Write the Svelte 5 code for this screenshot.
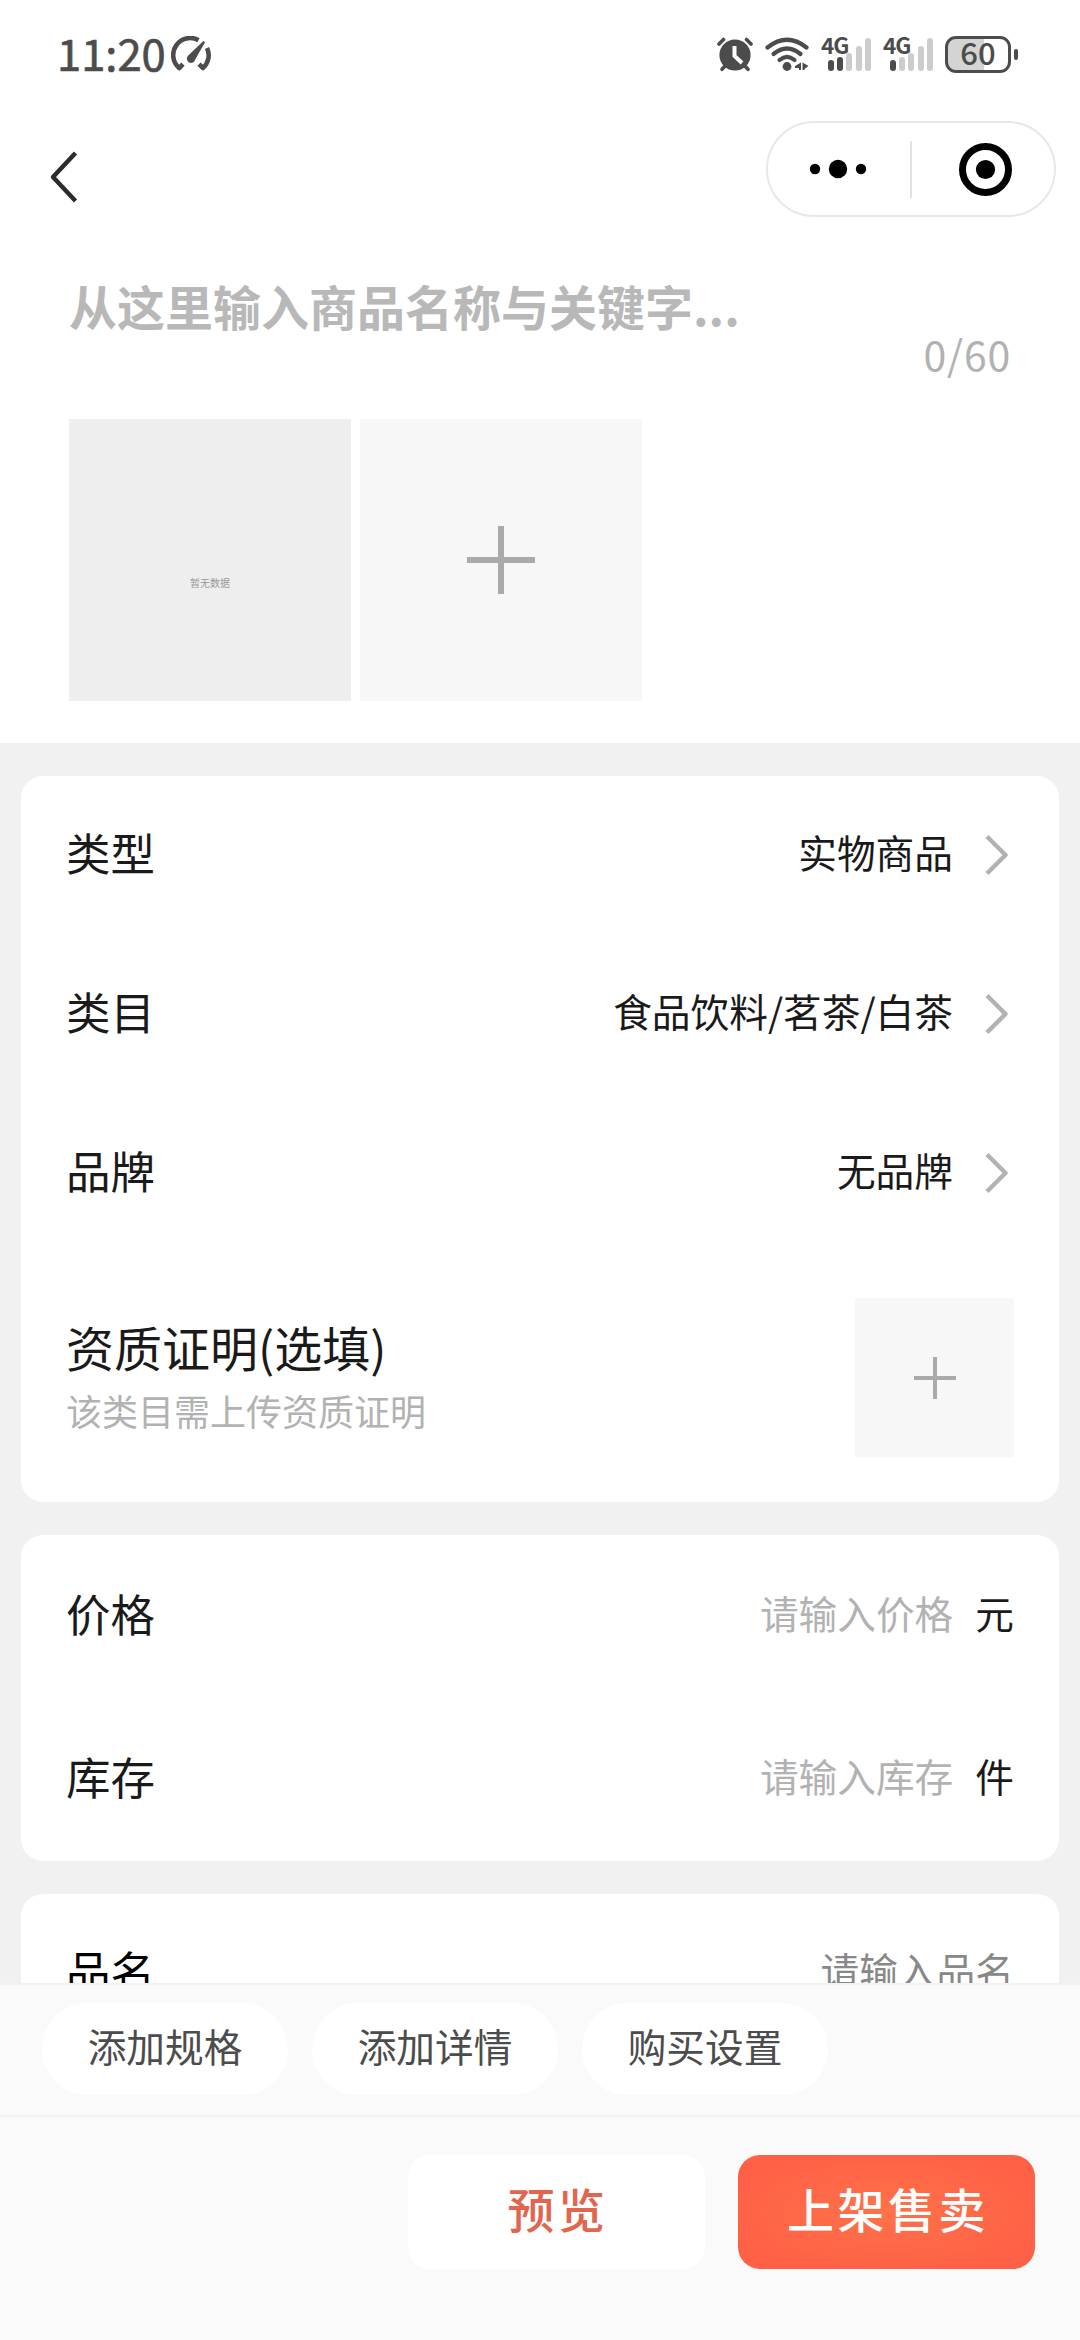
<script>
  const goodsRows = [
    { label: "类型", value: "实物商品" },
    { label: "类目", value: "食品饮料/茗茶/白茶" },
    { label: "品牌", value: "无品牌" }
  ];

  const stockRows = [
    { label: "价格", hint: "请输入价格", unit: "元" },
    { label: "库存", hint: "请输入库存", unit: "件" }
  ];

  const shortcuts = ["添加规格", "添加详情", "购买设置"];

  // number of lit bars for each sim card
  const sims = [2, 1];
  const barHeights = [11, 14, 18, 25, 33];

  const maxLength = 60;
  let title = $state("");
</script>

<div class="page">
  <div class="status-bar">
    <span class="time">11:20</span>
    <svg class="gauge" width="40" height="36" viewBox="0 0 40 36">
      <g fill="none" stroke="#4c4c4c" stroke-width="4.6" stroke-linejoin="round">
        <path d="M27.5 4.2 A17 17 0 0 0 8.2 32 L12 28.2" />
        <path d="M36 12 A17 17 0 0 1 32 32 L28 28.2" />
      </g>
      <path d="M32.4 5 L34 6.2 L24.2 23.4 A4.2 4.2 0 1 1 17 19.8 Z" fill="#4c4c4c" />
    </svg>
    <div class="status-icons">
      <svg class="alarm" width="36" height="36" viewBox="0 0 36 36">
        <g stroke="#4c4c4c" stroke-width="3.6" stroke-linecap="round">
          <path d="M2 8 L6.5 3.5 M34 8 L29.5 3.5" />
          <path d="M8 30 L5 33.3 M28 30 L31 33.3" />
        </g>
        <circle cx="18" cy="19" r="15.6" fill="#4c4c4c" />
        <path d="M17.5 10 V20 L25 27" fill="none" stroke="#fff" stroke-width="4" />
      </svg>
      <svg class="wifi" width="44" height="36" viewBox="0 0 44 36">
        <g fill="none" stroke="#4c4c4c" stroke-width="4.2" stroke-linecap="round">
          <path d="M2.5 11.5 Q22 -4 41.5 11.5" />
          <path d="M8.5 18 Q22 7 35.5 18" />
          <path d="M14.5 24 Q22 17.8 29.5 24" />
        </g>
        <circle cx="22" cy="30.5" r="4.4" fill="#4c4c4c" />
        <path d="M30 30 L36 26.5 V34 H34 V32 H30 Z M37.5 26.5 L43.5 30 L39.5 33 V34 H37.5 Z" fill="#4c4c4c" />
      </svg>
      {#each sims as level}
        <div class="sim">
          <span class="network">4G</span>
          <div class="bars">
            {#each barHeights as height, i}
              <i class:lit={i < level} style="height: {height}px"></i>
            {/each}
          </div>
        </div>
      {/each}
      <div class="battery"><span>60</span></div>
      <div class="battery-cap"></div>
    </div>
  </div>

  <header>
    <svg class="back" width="30" height="54" viewBox="0 0 30 54">
      <path d="M26.5 3 L4 27 L26.5 51" fill="none" stroke="#2b2b2b" stroke-width="4.4" stroke-linejoin="round" />
    </svg>
    <div class="capsule">
      <svg width="290" height="96" viewBox="0 0 290 96">
        <circle cx="49" cy="48" r="5.2" />
        <circle cx="72" cy="48" r="9.2" />
        <circle cx="95" cy="48" r="5.2" />
        <path d="M145 20 V77" stroke="#e2e2e2" stroke-width="2" />
        <circle cx="219.5" cy="48.5" r="23" fill="none" stroke="#000" stroke-width="7" />
        <circle cx="219.5" cy="48.5" r="9.6" />
      </svg>
    </div>
  </header>

  <section class="intro">
    <div class="title-hint">从这里输入商品名称与关键字...</div>
    <div class="counter">{title.length}/{maxLength}</div>
    <div class="pictures">
      <div class="picture empty">暂无数据</div>
      <div class="picture add">
        <svg width="68" height="68" viewBox="0 0 68 68">
          <path d="M34 0 V68 M0 34 H68" stroke="#aaa" stroke-width="6" />
        </svg>
      </div>
    </div>
  </section>

  <main>
    <div class="card">
      {#each goodsRows as row}
        <div class="row">
          <span class="label">{row.label}</span>
          <span class="value">{row.value}</span>
          <svg class="arrow" width="24" height="42" viewBox="0 0 24 42">
            <path d="M3 2.5 L21.5 21 L3 39.5" fill="none" stroke="#b2b2b2" stroke-width="4.4" stroke-linejoin="round" />
          </svg>
        </div>
      {/each}
      <div class="proof">
        <div class="proof-text">
          <div class="proof-title">资质证明(选填)</div>
          <div class="proof-note">该类目需上传资质证明</div>
        </div>
        <div class="proof-add">
          <svg width="42" height="42" viewBox="0 0 42 42">
            <path d="M21 0 V42 M0 21 H42" stroke="#aaa" stroke-width="4" />
          </svg>
        </div>
      </div>
    </div>

    <div class="card">
      {#each stockRows as row}
        <div class="row tall">
          <span class="label">{row.label}</span>
          <span class="value hint">{row.hint}</span>
          <span class="unit">{row.unit}</span>
        </div>
      {/each}
    </div>

    <div class="card">
      <div class="row">
        <span class="label black">品名</span>
        <span class="value name-hint">请输入品名</span>
      </div>
    </div>
  </main>

  <footer>
    <div class="shortcuts">
      {#each shortcuts as shortcut}
        <button class="pill">{shortcut}</button>
      {/each}
    </div>
    <div class="actions">
      <button class="action preview">预览</button>
      <button class="action publish">上架售卖</button>
    </div>
  </footer>
</div>

<style>
  :global(body) {
    margin: 0;
    background: #f1f1f1;
  }

  .page {
    width: 1080px;
    height: 2340px;
    display: flex;
    flex-direction: column;
    overflow: hidden;
    background: #f1f1f1;
    color: #1a1a1a;
    font-family: "Noto Sans CJK SC", "Noto Sans", sans-serif;
  }

  button {
    border: none;
    padding: 0;
    font-family: inherit;
  }

  .status-bar {
    height: 108px;
    flex: none;
    box-sizing: border-box;
    padding: 0 62px 0 57px;
    display: flex;
    align-items: center;
    background: #fff;
    color: #4c4c4c;
  }

  .time {
    width: 106px;
    padding-bottom: 2px;
    font-size: 43.5px;
    line-height: 60px;
    -webkit-text-stroke: 0.7px #4c4c4c;
  }

  .gauge {
    margin-left: 8px;
  }

  .status-icons {
    margin-left: auto;
    display: flex;
    align-items: center;
  }

  .wifi {
    margin-left: 12px;
  }

  .sim {
    position: relative;
    width: 50px;
    height: 34px;
    margin-left: 12px;
    display: flex;
    justify-content: flex-end;
  }

  .network {
    position: absolute;
    left: 0;
    top: -2px;
    font-size: 22.5px;
    line-height: 18px;
    font-weight: 700;
    letter-spacing: -1px;
  }

  .bars {
    display: flex;
    align-items: flex-end;
    gap: 3.3px;
  }

  .bars i {
    width: 6px;
    border-radius: 3px;
    background: #ccc;
  }

  .bars .lit {
    background: #4c4c4c;
  }

  .battery {
    width: 66px;
    height: 37px;
    margin-left: 12px;
    box-sizing: border-box;
    padding-bottom: 4px;
    border: 3px solid #4c4c4c;
    border-radius: 11px;
    background: linear-gradient(to right, #d4d4d4 60%, #fff 60%);
    display: flex;
    align-items: center;
    justify-content: center;
    font-size: 31px;
    font-weight: 500;
    line-height: 28px;
  }

  .battery-cap {
    width: 4px;
    height: 11px;
    margin-left: 3px;
    border-radius: 2px;
    background: #4c4c4c;
  }

  header {
    height: 132px;
    flex: none;
    box-sizing: border-box;
    padding: 13px 24px 0 49px;
    display: flex;
    justify-content: space-between;
    background: #fff;
  }

  .back {
    margin-top: 29px;
  }

  .capsule {
    width: 290px;
    height: 96px;
    box-sizing: border-box;
    border: 2px solid #e8e8e8;
    border-radius: 48px;
  }

  .capsule svg {
    display: block;
    margin: -2px;
  }

  .intro {
    height: 503px;
    flex: none;
    box-sizing: border-box;
    padding: 30px 69px 0;
    background: #fff;
  }

  .title-hint {
    height: 70px;
    line-height: 70px;
    font-size: 48px;
    font-weight: 700;
    color: #b8b8b8;
  }

  .counter {
    height: 28px;
    line-height: 26px;
    text-align: right;
    font-size: 41px;
    letter-spacing: 0.8px;
    color: #b2b2b2;
  }

  .pictures {
    margin-top: 51px;
    display: flex;
    gap: 9px;
  }

  .picture {
    width: 282px;
    height: 282px;
    display: flex;
    align-items: center;
    justify-content: center;
  }

  .empty {
    box-sizing: border-box;
    padding-top: 44px;
    background: #eee;
    font-size: 10px;
    color: #999;
  }

  .add {
    background: #f7f7f7;
  }

  main {
    height: 1240px;
    flex: none;
    box-sizing: border-box;
    padding: 33px 21px 0;
    overflow: hidden;
  }

  .card {
    margin-bottom: 33px;
    padding: 0 45px;
    border-radius: 22px;
    background: #fff;
  }

  .row {
    height: 159px;
    box-sizing: border-box;
    padding-bottom: 3px;
    display: flex;
    align-items: center;
  }

  .tall {
    height: 163px;
  }

  .label {
    padding-bottom: 5px;
    font-size: 44.5px;
  }

  .black {
    color: #000;
  }

  .value {
    margin-left: auto;
    padding-bottom: 7px;
    font-size: 38.7px;
  }

  .hint {
    color: #b2b2b2;
  }

  .name-hint {
    color: #888;
  }

  .arrow {
    margin: 2px 6px 0 31px;
  }

  .unit {
    margin-left: 22px;
    padding-bottom: 7px;
    font-size: 38.7px;
  }

  .proof {
    height: 249px;
    display: flex;
    align-items: center;
    justify-content: space-between;
  }

  .proof-title {
    font-size: 48px;
    line-height: 64px;
  }

  .proof-note {
    font-size: 36px;
    line-height: 64px;
    color: #b2b2b2;
  }

  .proof-add {
    width: 159px;
    height: 159px;
    border-radius: 2px;
    background: #f7f7f7;
    display: flex;
    align-items: center;
    justify-content: center;
  }

  footer {
    flex: 1;
    border-top: 2px solid #f2f2f2;
    background: #fafafa;
  }

  .shortcuts {
    height: 132px;
    box-sizing: border-box;
    padding: 18px 42px 0;
    display: flex;
    gap: 24px;
    border-bottom: 2px solid #f2f2f2;
  }

  .pill {
    width: 246px;
    height: 92px;
    padding-bottom: 8px;
    border-radius: 46px;
    background: #fff;
    font-size: 38.7px;
    color: #4c4c4c;
  }

  .actions {
    padding: 38px 45px 0;
    display: flex;
    justify-content: flex-end;
    gap: 33px;
  }

  .action {
    width: 297px;
    height: 114px;
    padding-bottom: 10px;
    border-radius: 22px;
    font-size: 47px;
    font-weight: 500;
    letter-spacing: 3.5px;
    text-indent: 3px;
  }

  .preview {
    background: #fff;
    color: #e2654e;
  }

  .publish {
    background: radial-gradient(#ff7249, #ff6146 75%);
    color: #fff;
  }
</style>
